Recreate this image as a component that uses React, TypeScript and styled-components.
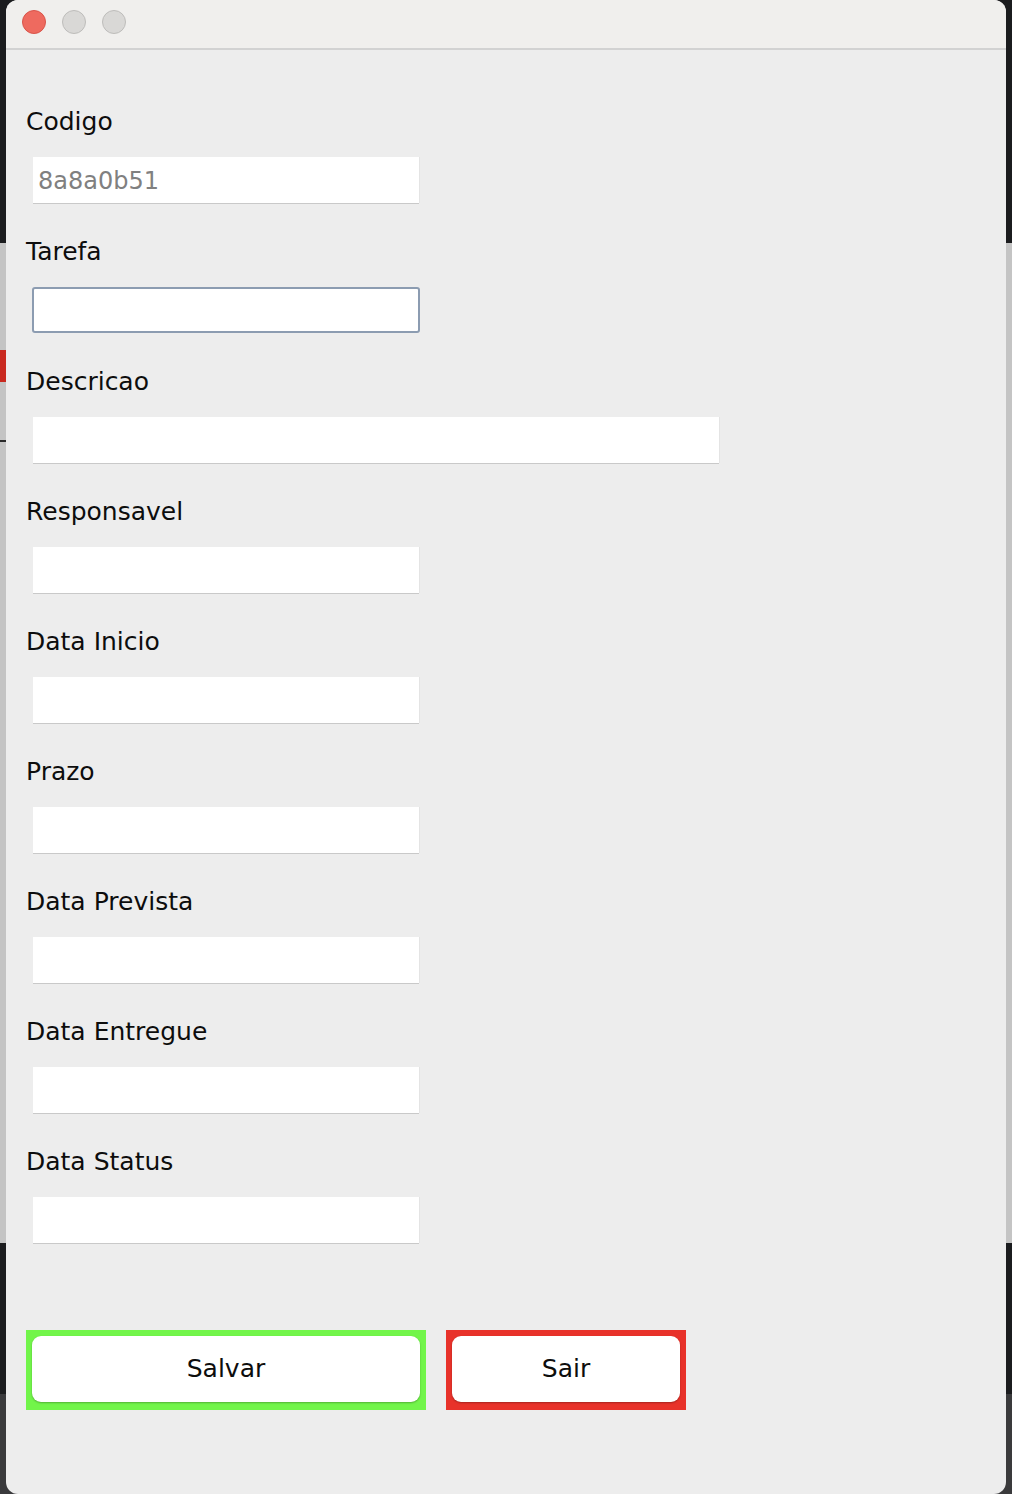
import React from "react";
import styled, { createGlobalStyle } from "styled-components";

const Global = createGlobalStyle`
  html, body {
    margin: 0;
    padding: 0;
  }
  body {
    width: 1012px;
    height: 1494px;
    overflow: hidden;
    font-family: "DejaVu Sans", "Liberation Sans", sans-serif;
    background:
      linear-gradient(#c9291f, #c9291f) no-repeat 0 350px / 6px 32px,
      linear-gradient(#2a2a2a, #2a2a2a) no-repeat 0 440px / 12px 2px,
      linear-gradient(
        to bottom,
        #1b1c1e 0,
        #1b1c1e 243px,
        #c4c4c4 243px,
        #c4c4c4 1243px,
        #1b1c1e 1243px,
        #1b1c1e 1394px,
        #3a3a3c 1394px
      );
  }
`;

const Window = styled.div`
  margin-left: 6px;
  width: 1000px;
  height: 1494px;
  background: #ededed;
  border-radius: 12px;
  overflow: hidden;
  display: flex;
  flex-direction: column;
`;

const TitleBar = styled.div`
  height: 48px;
  flex: none;
  background: #f0efed;
  border-bottom: 2px solid #d2d2d2;
  display: flex;
  align-items: flex-start;
  gap: 16px;
  padding: 10px 0 0 16px;
  box-sizing: border-box;
  height: 50px;
`;

const Light = styled.span<{ $color: string; $border: string }>`
  width: 22px;
  height: 22px;
  border-radius: 50%;
  background: ${(p) => p.$color};
  border: 1px solid ${(p) => p.$border};
`;

const Content = styled.div`
  padding: 57px 0 0 20px;
  display: flex;
  flex-direction: column;
`;

const Group = styled.div`
  display: flex;
  flex-direction: column;
  margin-bottom: 34px;
`;

const Label = styled.div`
  height: 26px;
  padding-top: 2px;
  line-height: 26px;
  font-size: 25px;
  color: #0d0d0d;
  margin-bottom: 22px;
`;

const Field = styled.div<{ $wide?: boolean; $focused?: boolean }>`
  margin-left: ${(p) => (p.$focused ? 6 : 7)}px;
  width: ${(p) => (p.$wide ? 686 : p.$focused ? 388 : 386)}px;
  height: 46px;
  box-sizing: border-box;
  background: #fff;
  border: ${(p) => (p.$focused ? "2px solid #8c9cb1" : "none")};
  border-radius: ${(p) => (p.$focused ? "3px" : "0")};
  box-shadow: ${(p) =>
    p.$focused ? "none" : "0 1px 0 #c9c9c9, 1px 0 0 #e4e4e4"};
  display: flex;
  align-items: center;
  padding: 2px 0 0 5px;
  font-size: 24px;
  color: #808080;
`;

const ButtonRow = styled.div`
  display: flex;
  gap: 20px;
  margin-top: 53px;
`;

const Frame = styled.div<{ $color: string; $width: number }>`
  width: ${(p) => p.$width}px;
  height: 80px;
  background: ${(p) => p.$color};
  padding: 6px;
  box-sizing: border-box;
`;

const Button = styled.button`
  width: 100%;
  height: 66px;
  border: none;
  border-radius: 9px;
  background: #fff;
  box-shadow: 0 1px 2px rgba(0, 0, 0, 0.28);
  font-family: "DejaVu Sans", "Liberation Sans", sans-serif;
  font-size: 25px;
  color: #0d0d0d;
  padding: 0;
  padding-bottom: 1px;
`;

const fields: { label: string; value?: string; wide?: boolean; focused?: boolean }[] = [
  { label: "Codigo", value: "8a8a0b51" },
  { label: "Tarefa", focused: true },
  { label: "Descricao", wide: true },
  { label: "Responsavel" },
  { label: "Data Inicio" },
  { label: "Prazo" },
  { label: "Data Prevista" },
  { label: "Data Entregue" },
  { label: "Data Status" },
];

export default function App() {
  return (
    <>
      <Global />
      <Window>
        <TitleBar>
          <Light $color="#ee6a5f" $border="#d8544a" />
          <Light $color="#d9d8d6" $border="#bdbcba" />
          <Light $color="#d9d8d6" $border="#bdbcba" />
        </TitleBar>
        <Content>
          {fields.map((f) => (
            <Group key={f.label}>
              <Label>{f.label}</Label>
              <Field $wide={f.wide} $focused={f.focused}>
                {f.value}
              </Field>
            </Group>
          ))}
          <ButtonRow>
            <Frame $color="#72f54a" $width={400}>
              <Button>Salvar</Button>
            </Frame>
            <Frame $color="#e8322a" $width={240}>
              <Button>Sair</Button>
            </Frame>
          </ButtonRow>
        </Content>
      </Window>
    </>
  );
}
